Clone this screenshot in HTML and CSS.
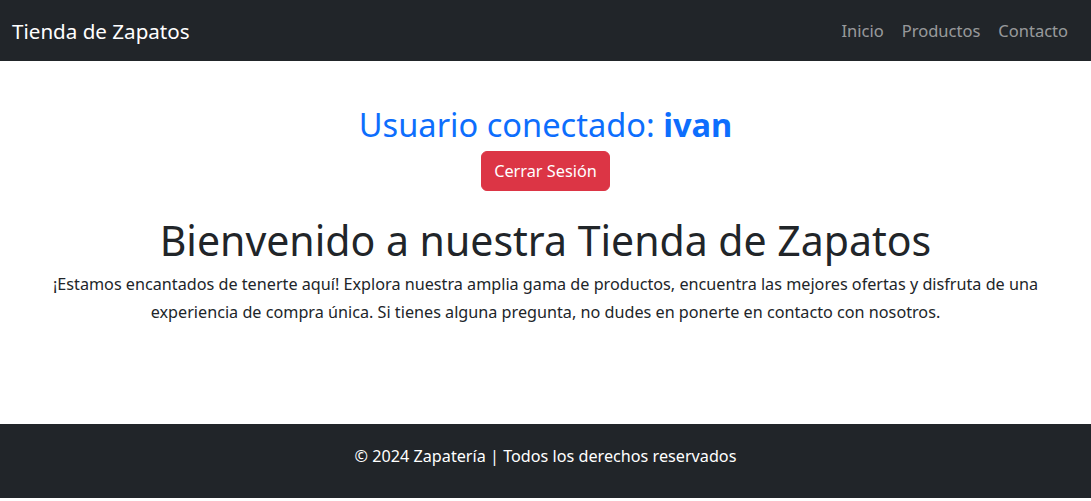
FILE: index.html
```html
<!DOCTYPE html>
<html lang="es">
<head>
<meta charset="utf-8">
<title>Tienda de Zapatos</title>
<link rel="stylesheet" href="styles.css">
</head>
<body>
<nav class="navbar">
  <a class="brand" href="#">Tienda de Zapatos</a>
  <ul class="nav">
    <li><a class="nav-link" href="#">Inicio</a></li>
    <li><a class="nav-link" href="#">Productos</a></li>
    <li><a class="nav-link" href="#">Contacto</a></li>
  </ul>
</nav>
<main class="main">
  <h2 class="user">Usuario conectado: <strong>ivan</strong></h2>
  <button class="btn-danger" type="button">Cerrar Sesión</button>
  <h1 class="title">Bienvenido a nuestra Tienda de Zapatos</h1>
  <p class="intro">¡Estamos encantados de tenerte aquí! Explora nuestra amplia gama de productos, encuentra las mejores ofertas y disfruta de una experiencia de compra única. Si tienes alguna pregunta, no dudes en ponerte en contacto con nosotros.</p>
</main>
<footer class="footer">
  <p>© 2024 Zapatería | Todos los derechos reservados</p>
</footer>
</body>
</html>
```
FILE: styles.css
```css
* { box-sizing: border-box; }
html, body { margin: 0; padding: 0; }
body {
  font-family: "Noto Sans", "Open Sans", sans-serif;
  font-size: 16px;
  line-height: 1.5;
  color: #212529;
  background: #fff;
}
.navbar {
  background: #212529;
  height: 61px;
  display: flex;
  align-items: center;
  justify-content: space-between;
  padding: 2px 14px 0 12px;
}
.brand {
  color: #fff;
  text-decoration: none;
  font-size: 20.6px;
}
.nav {
  list-style: none;
  margin: 0;
  padding: 0;
  display: flex;
}
.nav-link {
  display: block;
  padding: 8px 9px;
  font-size: 16.5px;
  color: rgba(255,255,255,.55);
  text-decoration: none;
}
.main {
  padding: 44px 12px 0;
  text-align: center;
  min-height: 363px;
}
.user {
  margin: 0 0 7px;
  font-size: 32.6px;
  font-weight: 400;
  line-height: 39px;
  color: #0d6efd;
}
.user strong { font-weight: 700; }
.btn-danger {
  font-family: inherit;
  font-size: 16.3px;
  line-height: 24px;
  padding: 7px 12px;
  height: 40px;
  color: #fff;
  background: #dc3545;
  border: 1px solid #dc3545;
  border-radius: 6px;
}
.title {
  margin: 24px 0 5px;
  font-size: 41px;
  font-weight: 400;
  line-height: 50px;
}
.intro {
  margin: 0;
  font-size: 16.2px;
  line-height: 28px;
}
.footer {
  background: #212529;
  color: #fff;
  text-align: center;
  padding: 20px 12px 30px;
  font-size: 16.2px;
}
.footer p { margin: 0; }
```
